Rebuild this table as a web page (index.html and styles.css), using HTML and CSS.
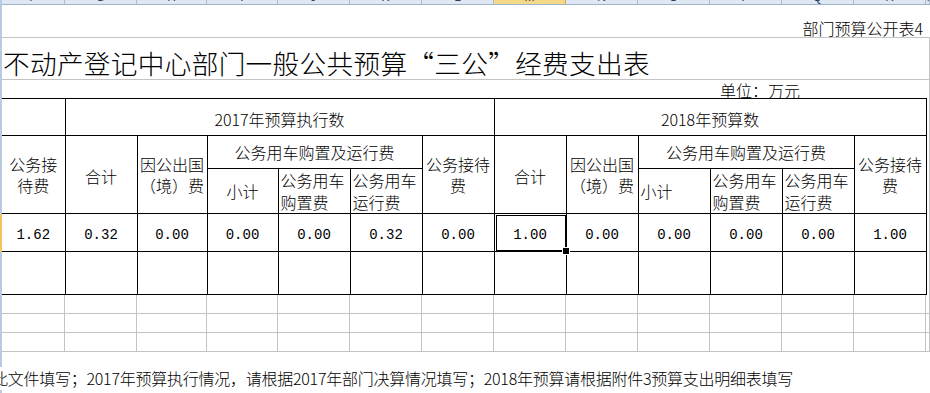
FILE: index.html
```
<!DOCTYPE html>
<html lang="zh-CN">
<head>
<meta charset="utf-8">
<title>不动产登记中心部门一般公共预算“三公”经费支出表</title>
<link rel="stylesheet" href="styles.css">
</head>
<body>
<div class="sheet">
  <div class="colhead">
    <div class="ch"><span>F</span></div>
    <div class="ch"><span>G</span></div>
    <div class="ch"><span>H</span></div>
    <div class="ch"><span>I</span></div>
    <div class="ch"><span>J</span></div>
    <div class="ch"><span>K</span></div>
    <div class="ch"><span>L</span></div>
    <div class="ch sel"><span>M</span></div>
    <div class="ch"><span>N</span></div>
    <div class="ch"><span>O</span></div>
    <div class="ch"><span>P</span></div>
    <div class="ch"><span>Q</span></div>
    <div class="ch"><span>R</span></div>
    <div class="ch"><span>S</span></div>
  </div>

  <div class="r1"><span class="pubno">部门预算公开表4</span></div>
  <div class="r2"><h1 class="title">不动产登记中心部门一般公共预算“三公”经费支出表</h1></div>
  <div class="r3"><span class="unit">单位：万元</span></div>

  <div class="tblrow">
    <table class="budget">
      <colgroup>
        <col class="w63"><col class="w72"><col class="w70"><col class="w71">
        <col class="w72"><col class="w72"><col class="w72"><col class="w72">
        <col class="w72"><col class="w72"><col class="w72"><col class="w72"><col class="w72">
      </colgroup>
      <tr class="h1">
        <td></td>
        <td colspan="6">2017年预算执行数</td>
        <td colspan="6">2018年预算数</td>
      </tr>
      <tr class="h2">
        <td rowspan="2" class="two">公务接<br>待费</td>
        <td rowspan="2" class="pt">合计</td>
        <td rowspan="2" class="two">因公出国<br>（境）费</td>
        <td colspan="3">公务用车购置及运行费</td>
        <td rowspan="2" class="two">公务接待<br>费</td>
        <td rowspan="2" class="pt">合计</td>
        <td rowspan="2" class="two">因公出国<br>（境）费</td>
        <td colspan="3">公务用车购置及运行费</td>
        <td rowspan="2" class="two">公务接待<br>费</td>
      </tr>
      <tr class="h3">
        <td>小计</td>
        <td class="l">公务用车<br>购置费</td>
        <td class="l">公务用车<br>运行费</td>
        <td class="l">小计</td>
        <td class="l">公务用车<br>购置费</td>
        <td class="l">公务用车<br>运行费</td>
      </tr>
      <tr class="data">
        <td>1.62</td>
        <td>0.32</td>
        <td>0.00</td>
        <td>0.00</td>
        <td>0.00</td>
        <td>0.32</td>
        <td>0.00</td>
        <td class="cur">1.00</td>
        <td>0.00</td>
        <td>0.00</td>
        <td>0.00</td>
        <td>0.00</td>
        <td>1.00</td>
      </tr>
      <tr class="blank">
        <td></td><td></td><td></td><td></td><td></td><td></td><td></td>
        <td></td><td></td><td></td><td></td><td></td><td></td>
      </tr>
    </table>
    <div class="edge"></div>
  </div>

  <div class="grid">
    <div class="c"></div><div class="c"></div><div class="c"></div><div class="c"></div><div class="c"></div><div class="c"></div><div class="c"></div>
    <div class="c"></div><div class="c"></div><div class="c"></div><div class="c"></div><div class="c"></div><div class="c"></div><div class="c"></div>
    <div class="c"></div><div class="c"></div><div class="c"></div><div class="c"></div><div class="c"></div><div class="c"></div><div class="c"></div>
    <div class="c"></div><div class="c"></div><div class="c"></div><div class="c"></div><div class="c"></div><div class="c"></div><div class="c"></div>
    <div class="c"></div><div class="c"></div><div class="c"></div><div class="c"></div><div class="c"></div><div class="c"></div><div class="c"></div>
    <div class="c"></div><div class="c"></div><div class="c"></div><div class="c"></div><div class="c"></div><div class="c"></div><div class="c"></div>
    <div class="c last"></div><div class="c last"></div><div class="c last"></div><div class="c last"></div><div class="c last"></div><div class="c last"></div><div class="c last"></div>
    <div class="c last"></div><div class="c last"></div><div class="c last"></div><div class="c last"></div><div class="c last"></div><div class="c last"></div><div class="c last"></div>
    <div class="note">此文件填写；2017年预算执行情况，请根据2017年部门决算情况填写；2018年预算请根据附件3预算支出明细表填写</div>
  </div>
</div>
</body>
</html>
```

FILE: styles.css
```
* {
  box-sizing: border-box;
}

html,
body {
  margin: 0;
  padding: 0;
}

body {
  width: 930px;
  height: 393px;
  overflow: hidden;
  background: #fff;
  color: #000;
  font-family: "Noto Sans CJK SC", sans-serif;
  font-size: 16px;
  font-weight: 300;
}

.sheet {
  --cols: 63px 72px 70px 71px repeat(9, 72px) 1fr;
  --grid: #c4c4c4;
  border-left: 2px solid #b9cbe3;
  min-height: 393px;
}

/* column letter strip (cropped at the top) */
.colhead {
  display: grid;
  grid-template-columns: var(--cols);
  height: 5px;
  background: #dfe7f2;
  border-bottom: 1px solid #9eb3cc;
}

.ch {
  overflow: hidden;
  border-right: 1px solid #a9bcd3;
  font-family: "Liberation Sans", sans-serif;
  font-size: 12px;
  font-weight: normal;
  line-height: 14px;
  color: #2b3f5c;
  text-align: center;
}

.ch span {
  display: block;
  margin-top: -10px;
}

.ch.sel {
  background: #f6d987;
  border-right-color: #dba64c;
}

/* rows above the table */
.r1 {
  height: 33px;
  display: flex;
  justify-content: flex-end;
  align-items: flex-end;
  padding: 0 7px 1px 0;
  border-bottom: 1px solid var(--grid);
  line-height: 16px;
  white-space: nowrap;
}

.r2 {
  height: 42px;
  display: flex;
  align-items: flex-end;
  padding: 0 0 3px 1px;
  border-bottom: 1px solid var(--grid);
  border-right: 1px solid var(--grid);
}

.title {
  margin: 0;
  font-size: 26.67px;
  font-weight: 300;
  line-height: 27px;
  white-space: nowrap;
  letter-spacing: 0.3px;
  font-feature-settings: "fwid" 1;
}

.r3 {
  height: 18px;
  display: grid;
  grid-template-columns: var(--cols);
  align-items: end;
  line-height: 16px;
  border-right: 1px solid var(--grid);
}

.unit {
  grid-column: 11 / span 3;
  padding-left: 10px;
  white-space: nowrap;
}

/* bordered table */
.tblrow {
  display: flex;
}

.edge {
  flex: 1;
  border-right: 1px solid var(--grid);
}

.budget {
  border-collapse: collapse;
  table-layout: fixed;
  width: 924px;
  flex: none;
}

.w63 { width: 63px; }
.w70 { width: 70px; }
.w71 { width: 71px; }
.w72 { width: 72px; }

.budget td {
  border: 1px solid #000;
  padding: 0;
  text-align: center;
  vertical-align: middle;
  line-height: 21px;
  white-space: nowrap;
}

.budget tr > td:first-child {
  border-left: none;
}

.budget .h1 { height: 37px; }
.budget .h2 { height: 33px; }
.budget .h3 { height: 44px; }
.budget .data { height: 38px; }
.budget .blank { height: 43px; }

.budget .h1 td {
  padding-top: 4px;
}

.budget td.two {
  line-height: 21px;
  padding-top: 0;
}

.budget td.pt {
  padding-top: 4px;
}

.budget td.l {
  text-align: left;
  padding-left: 2px;
  line-height: 22px;
}

.budget .data td {
  font-family: "Liberation Mono", monospace;
  font-size: 14px;
  font-weight: normal;
  padding-top: 5px;
}

.budget .data td:first-child {
  box-shadow: -2px 0 0 #f2c65c;
}

.budget td.cur {
  position: relative;
}

.budget td.cur::before {
  content: "";
  position: absolute;
  inset: 1px 0 0 1px;
  border: 1px solid #000;
}

.budget td.cur::after {
  content: "";
  position: absolute;
  right: -4px;
  bottom: -4px;
  width: 6px;
  height: 6px;
  background: #000;
  border: 1px solid #fff;
}

/* plain gridlines below the table */
.grid {
  display: grid;
  grid-template-columns: var(--cols);
  grid-template-rows: 19px 19px 19px 43px;
}

.grid .c {
  border-right: 1px solid var(--grid);
  border-bottom: 1px solid var(--grid);
}

.grid .c.last {
  border-bottom: none;
}

.note {
  grid-column: 1 / -1;
  grid-row: 4;
  justify-self: start;
  align-self: start;
  margin: 15px 0 0 -10px;
  background: #fff;
  line-height: 23px;
  letter-spacing: -0.25px;
  white-space: nowrap;
}
```
